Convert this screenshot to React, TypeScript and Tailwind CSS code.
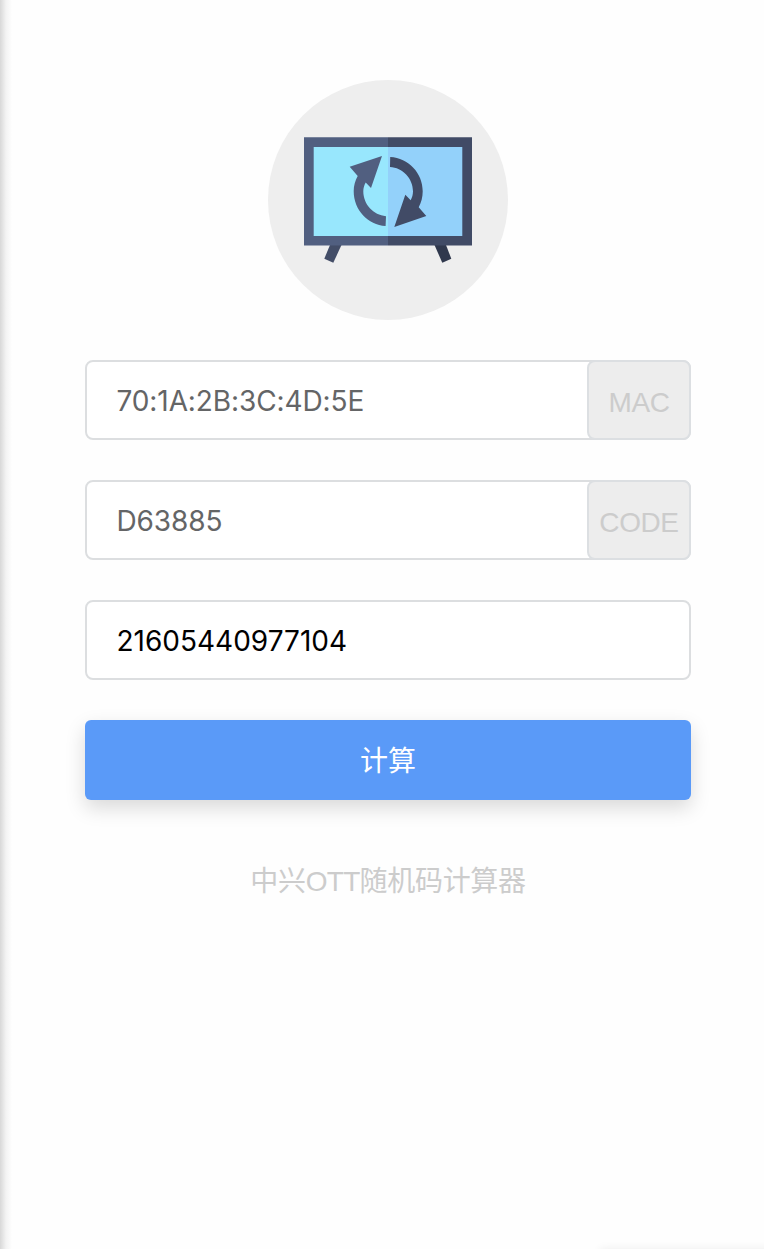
interface FieldProps {
  value: string;
  label?: string;
  active?: boolean;
}

// Bordered text field with an optional grey tag on its right end
function Field({ value, label, active }: FieldProps) {
  return (
    <div className="flex h-20 rounded-lg border-2 border-[#dcdee0] bg-white">
      <span
        className={
          active
            ? "flex flex-1 items-center pt-0.5 pl-[29.5px] font-['Inter'] text-[28px] text-black"
            : "flex flex-1 items-center pt-0.5 pl-[29.5px] font-['Inter'] text-[28px] tracking-[-0.1px] text-[#646566]"
        }
      >
        {value}
      </span>
      {label && (
        <span className="-my-0.5 -mr-0.5 flex w-[104px] items-center justify-center rounded-lg border-2 border-[#dcdfe2] bg-[#ededed] pt-1.5 text-[28px] tracking-[-0.4px] text-[#cccccc]">
          {label}
        </span>
      )}
    </div>
  );
}

function TvLogo() {
  return (
    <svg viewBox="0 0 240 240" className="size-60" aria-hidden="true">
      <circle cx="120" cy="120" r="120" fill="#eeeeee" />
      {/* legs */}
      <path d="M62 165h11.5l-8.2 17.7-9-4z" fill="#434d67" />
      <path d="M166.5 165H178l5.3 13.7-9 4z" fill="#30384d" />
      {/* frame and screen, lit from the left */}
      <path d="M36 57.2h84v108.4H36z" fill="#515f80" />
      <path d="M120 57.2h84v108.4h-84z" fill="#414b66" />
      <path d="M45.7 67H120v89H45.7z" fill="#98e7fd" />
      <path d="M120 67h74.3v89H120z" fill="#93d1fa" />
      {/* refresh arrows */}
      <path
        d="M114 76 81.7 86.7l8 9.3C87.2 100.5 85.7 105.5 85.7 111.3C85.7 130 100 145.2 117.6 146L118 136.2C105.5 135.2 95.3 124.5 95.3 111.3C95.3 108 96.2 105 97.7 102.4L103 108z"
        fill="#515f80"
      />
      <path
        d="M122.2 77C140.5 78 154.7 93 154.7 111.3C154.7 117.2 153.3 122.5 150.7 127.3L158.3 136 126.3 147 137.3 114.7 142.7 120.2C144.2 117.5 145 114.5 145 111.3C145 98.5 134.5 87.5 122 87z"
        fill="#414b66"
      />
    </svg>
  );
}

export default function App() {
  return (
    <div className="relative flex h-[1249px] w-[764px] flex-col items-center overflow-hidden bg-[#fefefe] pl-3 pt-20 font-['Liberation_Sans','Noto_Sans_CJK_SC',sans-serif]">
      {/* Shadow cast by the neighbouring panel */}
      <div className="absolute inset-y-0 left-0 w-3 bg-linear-to-r from-[#d8d8d8] via-[#f3f3f3] to-[#fefefe]" />

      <TvLogo />

      <div className="mt-10 flex w-[606px] flex-col gap-10">
        <Field value="70:1A:2B:3C:4D:5E" label="MAC" />
        <Field value="D63885" label="CODE" />
        <Field value="21605440977104" active />
        <button className="h-20 rounded-md bg-[#5a9af8] pt-1 text-[28px] text-white shadow-[0_8px_20px_rgba(0,0,0,0.15)]">
          计算
        </button>
      </div>

      <p className="mt-[62px] text-[28px] leading-10 tracking-[-0.3px] text-[#cccccc]">
        中兴<span className="tracking-[-0.7px]">OTT</span>随机码计算器
      </p>

      <div className="absolute -bottom-5 left-[600px] h-5 w-60 shadow-[0_0_10px_rgba(0,0,0,0.07)]" />
    </div>
  );
}
